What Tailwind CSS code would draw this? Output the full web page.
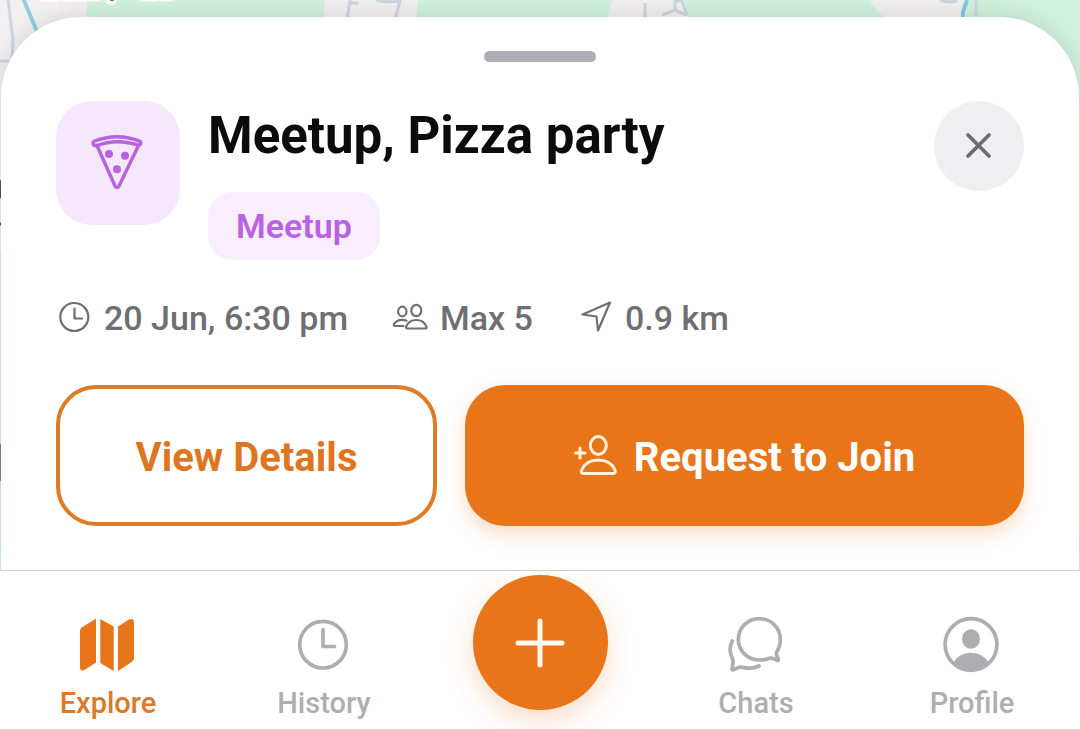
<!DOCTYPE html>
<html lang="en">
<head>
  <meta charset="UTF-8" />
  <meta name="viewport" content="width=device-width, initial-scale=1.0"/>
  <title>Meetup, Pizza party</title>
  <script src="https://cdn.jsdelivr.net/npm/@tailwindcss/browser@4"></script>
</head>
<body class="bg-white font-['Roboto',sans-serif] overflow-x-hidden">
  <div class="relative bg-[#d1f2df] pt-[17px] overflow-hidden">
    <!-- map behind the sheet -->
    <svg class="absolute inset-0 w-full h-full" viewBox="0 0 1080 570" preserveAspectRatio="none" fill="none" aria-hidden="true">
      <path d="M0 0H87V250H0Z M325 0H418L415 30H322Z M613 0H684L690 30H602Z M872 0L870 3L896 30H965L967 0Z" fill="#f3f0f1"/>
      <path d="M8 0L13 40L12 60 M0 61H12 M350 0L347 20 M350 3H359 M376 0Q388 3 400 1L395 20 M645 3V20 M662 15L675 10L687 15 M675 10V1H682L687 15 M940 0Q948 3 957 1 M976 0V20" stroke="#cdd5df" stroke-width="3"/>
      <path d="M23 -2L38 34" stroke="#8fd0dc" stroke-width="4"/>
      <path d="M967 0L963 12V20" stroke="#7ecbe0" stroke-width="4"/>
      <path d="M42 -1H58 M64 -1H98 M142 -1H156 M161 -1H171" stroke="#fff" stroke-width="5" stroke-linecap="round"/>
      <circle cx="111" cy="-1" r="6" fill="#fff"/>
      <path d="M110 0H114" stroke="#777" stroke-width="2"/>
      <path d="M0 180V198M0 222V225" stroke="#55555a" stroke-width="2"/>
      <path d="M0 443V480" stroke="#7b8794" stroke-width="2"/>
    </svg>

    <section class="relative mx-px bg-white rounded-t-[80px] border-b border-[#cdd0d3] px-[55px] pt-[34px] pb-11 shadow-[0_-2px_24px_rgba(0,0,0,0.12)]">
      <div class="mx-auto w-28 h-[11px] rounded-full bg-[#aeaeb2]"></div>

      <header class="mt-[39px] flex items-start gap-7">
        <div class="size-[124px] shrink-0 rounded-[36px] bg-[#f5e8fd] flex items-center justify-center">
          <svg class="size-[60px]" viewBox="0 0 60 60" fill="none" stroke="#b762df" stroke-width="3.4" stroke-linecap="round" stroke-linejoin="round" aria-hidden="true">
            <path d="M6.5 12.5Q4.5 11.5 5.5 8.5Q29 -1 52.5 8.5Q53.5 11.5 51 12.3Q29 5 9 12.5Z"/>
            <path d="M9 12.5L27 53Q29 56 31 53L50.5 12.5"/>
            <g fill="#b762df" stroke="none">
              <circle cx="21" cy="21" r="4"/>
              <circle cx="37" cy="22.7" r="4"/>
              <circle cx="29" cy="36.3" r="4"/>
            </g>
          </svg>
        </div>
        <div class="flex-1 min-w-0">
          <h1 class="text-[51px] leading-[70px] font-bold text-[#0c0c0e]">Meetup, Pizza party</h1>
          <span class="mt-[21px] inline-block rounded-3xl bg-[#f8eefe] px-7 text-[34px] leading-[68px] font-semibold text-[#b962e4] align-top">Meetup</span>
        </div>
        <button type="button" aria-label="Close" class="size-[90px] shrink-0 rounded-full bg-[#efeff1] flex items-center justify-center">
          <svg class="size-8" viewBox="0 0 32 32" stroke="#6c6c70" stroke-width="3.7" stroke-linecap="round" aria-hidden="true">
            <path d="M5 5L26 26M26 5L5 26"/>
          </svg>
        </button>
      </header>

      <div class="mt-[38px] flex flex-wrap gap-x-11 text-[34px] leading-10 font-medium text-[#6f6f73]">
        <div class="flex items-center gap-3">
          <svg class="size-9" viewBox="0 -2 36 36" fill="none" stroke="currentColor" stroke-width="2.2" stroke-linecap="round" stroke-linejoin="round" aria-hidden="true">
            <circle cx="18.3" cy="15" r="14"/>
            <path d="M18.5 6.5V16.5H26"/>
          </svg>
          <span>20 Jun, 6:30 pm</span>
        </div>
        <div class="flex items-center gap-3">
          <svg class="size-9" viewBox="0 -2 36 36" fill="none" stroke="currentColor" stroke-width="2.2" stroke-linecap="round" stroke-linejoin="round" aria-hidden="true">
            <ellipse cx="24.3" cy="8.5" rx="5" ry="5.7"/>
            <ellipse cx="10.3" cy="9.5" rx="4.2" ry="4.8"/>
            <path d="M15.5 26.5Q13.5 26.5 14.2 24.5Q17 18 24.3 18Q31.6 18 34.4 24.5Q35 26.5 33 26.5Z"/>
            <path d="M11.5 24H3Q1.3 24 2 22Q4.5 17.8 10.3 17.8Q12.5 17.8 14.5 18.7"/>
          </svg>
          <span>Max 5</span>
        </div>
        <div class="flex items-center gap-3">
          <svg class="size-9" viewBox="0 -2 36 36" fill="none" stroke="currentColor" stroke-width="2.2" stroke-linejoin="round" aria-hidden="true">
            <path d="M33 .5L5.5 12.5L19.5 14.5L21 28.5Z"/>
          </svg>
          <span>0.9 km</span>
        </div>
      </div>

      <div class="mt-[47px] grid grid-cols-[381fr_559fr] gap-7 text-[40px] leading-[48px] font-bold">
        <button type="button" class="h-[141px] rounded-[40px] border-4 border-[#dd7b26] bg-white pt-1 text-[#de7621]">View Details</button>
        <button type="button" class="h-[141px] rounded-[40px] bg-[#e87519] text-white flex items-center justify-center gap-4 shadow-[0_8px_20px_rgba(232,117,25,0.25)]">
          <svg class="size-11" viewBox="0 0 44 44" fill="none" stroke="#fff3dc" stroke-width="3" stroke-linecap="round" stroke-linejoin="round" aria-hidden="true">
            <ellipse cx="24.3" cy="11.5" rx="8" ry="9"/>
            <path d="M9.5 39.5Q6.5 39.5 7.7 36Q12 26 24.3 26Q36.5 26 41 36Q42 39.5 39 39.5Z"/>
            <path d="M6 14V24M1.5 19H11"/>
          </svg>
          <span class="pt-1">Request to Join</span>
        </button>
      </div>
    </section>
  </div>

  <nav class="grid grid-cols-5 bg-white text-center text-[29px] leading-9 font-medium text-[#aeaeb2] overflow-hidden">
    <a href="#explore" class="flex flex-col items-center gap-2.5 pt-11 pb-2 text-[#d9792b]" aria-current="page">
      <svg class="size-[60px]" viewBox="0 0 60 60" fill="#e87519" aria-hidden="true">
        <path d="M2 16Q2 13.5 4 12.2L17 4.2Q18 3.7 18 5V47.5L6.5 55Q2 57 2 52Z"/>
        <path d="M22.3 4L35.7 11.5V56L22.3 48Z"/>
        <path d="M40 11.5L50.5 4.8Q56 2.5 56 8V43Q56 45.5 54 46.8L40 56Z"/>
      </svg>
      Explore
    </a>
    <a href="#history" class="flex flex-col items-center gap-2.5 pt-11 pb-2">
      <svg class="size-[60px]" viewBox="0 0 60 60" fill="none" stroke="currentColor" stroke-width="3.7" stroke-linecap="round" stroke-linejoin="round" aria-hidden="true">
        <circle cx="29" cy="29.7" r="23.3"/>
        <path d="M29 14.5V31.5H40.5"/>
      </svg>
      History
    </a>
    <div class="pt-1">
      <button type="button" aria-label="Create" class="mx-auto size-[135px] rounded-full bg-[#e87519] flex items-center justify-center shadow-[0_10px_28px_rgba(232,117,25,0.25)]">
        <svg class="size-[52px]" viewBox="0 0 52 52" stroke="#fffaf0" stroke-width="5" stroke-linecap="round" aria-hidden="true">
          <path d="M26 4V48M4 26H48"/>
        </svg>
      </button>
    </div>
    <a href="#chats" class="flex flex-col items-center gap-2.5 pt-11 pb-2">
      <svg class="size-[60px]" viewBox="0 0 60 60" fill="none" stroke="currentColor" stroke-width="3.7" stroke-linecap="round" stroke-linejoin="round" aria-hidden="true">
        <path d="M43.5 43.2Q39 45 33.3 45A21 20.7 0 1 1 54.3 25Q54.3 31 50.5 37.5Q50 39 51 41L52.3 44.5Q52.5 45.7 51.3 45.3L46 43.3Q44.8 42.8 43.5 43.2Z"/>
        <path d="M6.3 26Q2 34 6 42.5Q7.5 45.5 7 48L6 54Q6 55.2 7.5 54.6L13.5 52.3Q15 51.8 17 52.4Q26 54.5 33 51"/>
      </svg>
      Chats
    </a>
    <a href="#profile" class="flex flex-col items-center gap-2.5 pt-11 pb-2">
      <svg class="size-[60px]" viewBox="0 0 60 60" fill="currentColor" aria-hidden="true">
        <circle cx="29" cy="29.5" r="25.9" fill="none" stroke="currentColor" stroke-width="3.7"/>
        <ellipse cx="29" cy="24" rx="9" ry="9.8"/>
        <path d="M12 46.5Q18 37.7 29 37.7Q40 37.7 46 46.5Q39 56 29 56Q19 56 12 46.5Z"/>
      </svg>
      Profile
    </a>
  </nav>
</body>
</html>
